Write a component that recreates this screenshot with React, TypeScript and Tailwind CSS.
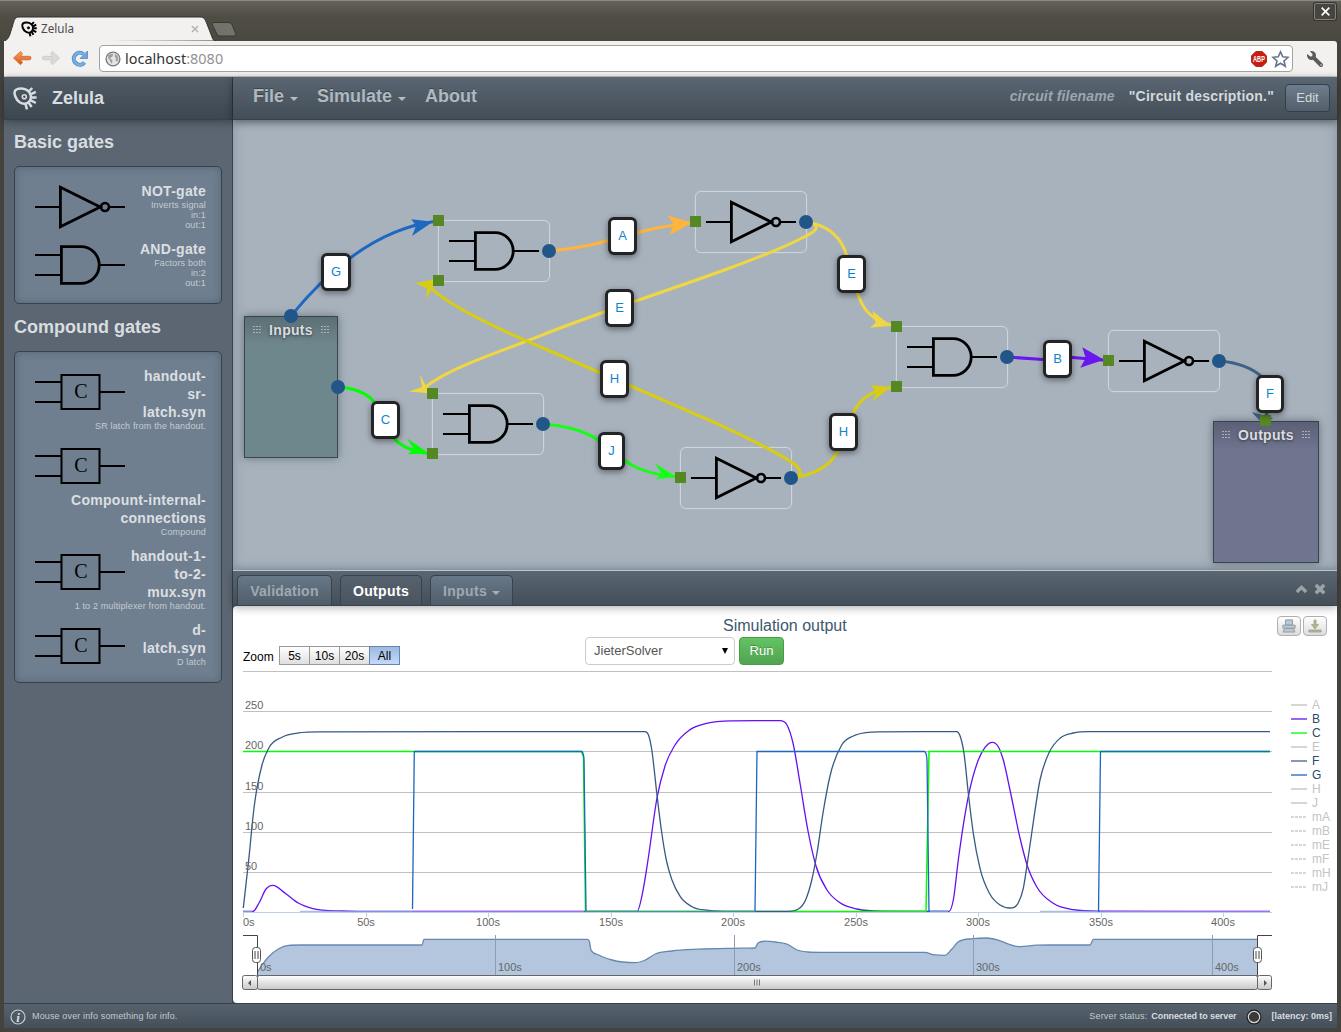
import React from "react";
import { FaWrench } from "react-icons/fa";

type Pt = [number, number];

/* Smooth cubic interpolation through a list of points, limited so that it never overshoots. */
function smooth(pts: Pt[]): string {
  const n = pts.length;
  const d: number[] = [];
  for (let i = 0; i < n - 1; i++) d.push((pts[i + 1][1] - pts[i][1]) / (pts[i + 1][0] - pts[i][0]));
  const m: number[] = [d[0]];
  for (let i = 1; i < n - 1; i++) {
    const h0 = pts[i][0] - pts[i - 1][0];
    const h1 = pts[i + 1][0] - pts[i][0];
    const mean = (h1 * d[i - 1] + h0 * d[i]) / (h0 + h1);
    const cap = 3 * Math.min(Math.abs(d[i - 1]), Math.abs(d[i]));
    m.push(d[i - 1] * d[i] <= 0 ? 0 : Math.sign(mean) * Math.min(Math.abs(mean), cap));
  }
  m.push(d[n - 2]);
  let s = `M${pts[0][0]} ${pts[0][1]}`;
  for (let i = 0; i < n - 1; i++) {
    const h = (pts[i + 1][0] - pts[i][0]) / 3;
    s += `C${(pts[i][0] + h).toFixed(2)} ${(pts[i][1] + m[i] * h).toFixed(2)} ${(pts[i + 1][0] - h).toFixed(2)} ${(pts[i + 1][1] - m[i + 1] * h).toFixed(2)} ${pts[i + 1][0]} ${pts[i + 1][1]}`;
  }
  return s;
}

const seriesB: Pt[] = [
  [243, 911.5], [253, 911.3], [259, 903], [266, 889], [273, 885.3], [285.3, 893.3], [298.7, 903.3],
  [312, 908.3], [342, 911], [380, 911.5], [637, 911.5], [643.7, 886.7], [648, 860], [657, 798], [665, 766],
  [675, 745], [690, 729.6], [706.7, 723.3], [733, 720.9], [780, 720.7], [787, 725], [793, 743], [800, 783],
  [808, 831], [816, 866], [827, 890], [840, 902.7], [857, 909], [883, 911.2], [949, 911.3], [953.3, 900], [958.3, 860],
  [968.3, 796.7], [978.3, 760], [985, 747.3], [992.3, 742.3], [998.3, 746.7], [1003.3, 760], [1010, 790],
  [1020, 838], [1027.3, 865.7], [1036.7, 886.7], [1053.3, 903.3], [1073.3, 909.7], [1100, 911.2], [1270, 911.5],
];
const seriesF: Pt[] = [
  [243.3, 908], [248.7, 860], [254, 808], [262, 765], [268.7, 748.3], [282, 737.2], [298.7, 732.9],
  [320, 731.8], [645, 731.6], [648.5, 735], [651.5, 748], [657, 795], [661.5, 831], [666.3, 860], [672, 880],
  [680.3, 896.7], [692, 906.7], [708.7, 910.3], [732, 911.3], [788, 911.3], [798, 909.3], [806, 899], [812, 879],
  [817, 853], [823, 813], [830, 776], [841.7, 745], [853.3, 736], [866, 732.6], [880, 731.8],
  [956.7, 731.6], [960, 735.7], [964, 753.3], [968.3, 793], [973.3, 833.3], [980, 868.3], [990, 894.3], [1000, 905],
  [1010, 908], [1018.3, 902.7], [1023.3, 888.3], [1027.3, 863.3], [1031.7, 833.3], [1040, 780], [1049.3, 752.3],
  [1060, 738.2], [1073.3, 733], [1090, 731.7], [1270, 731.6],
];
const navigator: Pt[] = [
  [257.5, 972], [262, 965], [268.7, 956.7], [278.7, 948.7], [288.7, 945.3], [300, 945], [422, 945], [424, 939.4],
  [587.5, 939.4], [589.4, 941.5], [591, 950], [598.7, 955], [612, 960], [635.3, 962.7], [645.3, 960], [655.3, 954],
  [672, 951], [698.7, 949.2], [732, 948.3], [755, 948], [758, 943], [766, 941.2], [775, 942], [788, 944.5], [796, 949.5],
  [808, 952], [820, 952.4], [925, 952.4], [933.3, 954.7], [945, 955.3], [951.7, 949.3], [958.3, 941.7], [973.3, 938.7],
  [986.7, 938], [996.7, 939.7], [1010, 944.6], [1020, 946.7], [1036.7, 945.2], [1050, 945], [1090, 945], [1093.3, 939.4],
  [1257.5, 939.4],
];

function Gate({ kind }: { kind: "not" | "and" | "c" }) {
  return (
    <svg width="90" height="50" viewBox="0 -25 90 50" fill="none" stroke="#000" className="block shrink-0">
      {kind === "not" && (
        <>
          <path d="M0 0H25M75 0H90" strokeWidth="2" />
          <path d="M25.4 -19.8L65.200 0L25.4 19.8Z" strokeWidth="2.8" />
          <circle cx="70" cy="0" r="4" strokeWidth="2.6" />
        </>
      )}
      {kind === "and" && (
        <>
          <path d="M0 -10H25M0 10H25M65 0H90" strokeWidth="2" />
          <path d="M26.4 -18.4H46A18.2 18.4 0 0 1 46 18.4H26.4Z" strokeWidth="2.8" />
        </>
      )}
      {kind === "c" && (
        <>
          <path d="M0 -10H26M0 10H26M65 0H90" strokeWidth="2" />
          <rect x="26.5" y="-17" width="38" height="34" strokeWidth="2" />
          <text x="45.8" y="5.6" textAnchor="middle" fontSize="20" fill="#000" stroke="none" fontFamily="Liberation Serif, serif">
            C
          </text>
        </>
      )}
    </svg>
  );
}

function LogoShape({ weight }: { weight: number }) {
  return (
    <>
      <path d="M2.400 3.200C5.200 .9 11.500 1 15 3.800C18.200 6.600 18.700 11 16.700 14C14.500 17.200 10.200 17.600 6.600 15.200C2.800 12.600 .2 6 2.400 3.200Z" strokeWidth={weight} strokeLinejoin="round" />
      <path d="M16.400 4L19.200 1M18.200 7.200L22.800 4.800M18.600 10.400H23.600M17.800 13.400L22.800 16M15.800 15.800L18.600 20M12.400 16.800L14 22.400" strokeWidth={weight} />
    </>
  );
}

function Caret() {
  return <span className="mt-[5px] ml-[6px] block h-0 w-0 border-x-4 border-t-4 border-x-transparent border-t-[#b4bdc6]" />;
}

function BrowserChrome() {
  return (
    <>
      <header className="relative flex h-[41px] shrink-0 items-start justify-between bg-linear-to-b from-[#66645c] via-[#504d45] via-40% to-[#4b4840]">
        <svg width="250" height="41" viewBox="0 0 250 41" className="block">
          <path d="M4 42C10 38 10 33 12.500 26C14 20 15 17 19 17H200C204 17 205 19 207 24L212 37C213 40 214 41 216 41Z" fill="#f2f1f0" stroke="#35332e" />
          <path d="M214 22.500H228C231 22.500 232 24 233 27L235.500 33C236 35 236 36 234 36H221C218 36 217 34.500 216 32L212.500 25C212 23.500 212 22.500 214 22.500Z" fill="#74726c" stroke="#3a3833" />
          <g transform="translate(21.200 21.500) scale(.66)" stroke="#000" fill="none">
            <LogoShape weight={3} />
            <circle cx="11" cy="9.600" r="1.800" fill="#000" />
          </g>
          <text x="41" y="33" fontSize="12" fill="#4c4c4c" fontFamily="Noto Sans, sans-serif" textLength="33" lengthAdjust="spacingAndGlyphs">
            Zelula
          </text>
          <path d="M192 26L198 32M198 26L192 32" stroke="#b5b3b0" strokeWidth="1.500" />
        </svg>
        <div className="mt-[3px] mr-[5px] flex h-[17px] w-[22px] items-center justify-center rounded-[2px] border border-[#84827b] bg-[#47453f] shadow-[0_0_0_1px_#35332e]">
          <svg width="9" height="9" viewBox="0 0 9 9">
            <path d="M.7 .7L8.300 8.300M8.300 .7L.7 8.300" stroke="#fff" strokeWidth="1.700" />
          </svg>
        </div>
      </header>
      <div className="mx-[4px] flex h-[36px] shrink-0 items-center rounded-tr-[3px] border-b border-[#c6c4c0] bg-[#f2f1f0]">
        <svg width="95" height="34" viewBox="4 42 95 34" className="block">
          <defs>
            <linearGradient id="orange" x1="0" y1="0" x2="0" y2="1">
              <stop offset="0" stopColor="#f5a962" />
              <stop offset="1" stopColor="#dd4f14" />
            </linearGradient>
          </defs>
          <path d="M13.500 58L20.500 51.500L22.500 53.500L20.500 56.300H29.500Q31 56.300 31 58T29.500 59.800H20.500L22.500 62.500L20.500 64.700Z" fill="url(#orange)" stroke="#d0602a" strokeWidth=".8" />
          <path d="M59.500 58L52.500 51.500L50.500 53.500L52.500 56.300H44Q42.500 56.300 42.500 58T44 59.800H52.500L50.500 62.500L52.500 64.700Z" fill="#dbdad8" stroke="#c8c6c4" strokeWidth=".8" />
          <path d="M84.500 62.500A6 6 0 1 1 83.500 54" fill="none" stroke="#4d8ac9" strokeWidth="4" />
          <path d="M84.500 62.500A6 6 0 1 1 83.500 54" fill="none" stroke="#79aee0" strokeWidth="2.400" />
          <path d="M87.500 51V58.500H80Z" fill="#6fa5da" stroke="#4d8ac9" strokeWidth=".8" />
        </svg>
        <div className="flex h-[27px] w-[1194px] items-center rounded-[4px] border border-[#a5a39f] bg-white pl-[5px]">
          <svg width="16" height="16" viewBox="0 0 16 16" className="block">
            <circle cx="8" cy="8" r="6.900" fill="#e6e6e6" stroke="#777" strokeWidth="1.300" />
            <path d="M3 4.500Q6 2 8.500 3L7.500 5.500L5 7.500L7.500 9L7 13Q5 11 4.500 9Q2.500 7 3 4.500ZM10 3L12.500 4.500L13.500 8L12 11L10.500 9.500L11 7L9.500 5.500Z" fill="#a2a2a2" />
          </svg>
          <div className="ml-[4px] text-[14.400px] leading-[24px] tracking-[0.04px] text-[#333]" style={{ fontFamily: '"Noto Sans", sans-serif' }}>
            localhost<span className="text-[#929292]">:8080</span>
          </div>
          <svg width="42" height="20" viewBox="1249 48 42 20" className="mr-[1px] ml-auto block">
            <path d="M1255.800 50.500H1262.200L1266.500 54.800V61.200L1262.200 65.500H1255.800L1251.500 61.200V54.800Z" fill="#cb1d0c" stroke="#9c3a30" />
            <text x="1259" y="61" textAnchor="middle" fontSize="8.500" fontWeight="bold" fill="#fff" textLength="12" lengthAdjust="spacingAndGlyphs" fontFamily="Liberation Sans, sans-serif">
              ABP
            </text>
            <path d="M1280.500 50.800L1282.800 55.800L1288 56.300L1284 60L1285.300 65.200L1280.500 62.300L1275.700 65.200L1277 60L1273 56.300L1278.200 55.800Z" fill="#fff" stroke="#66738e" strokeWidth="1.600" />
          </svg>
        </div>
        <FaWrench size={16} color="#5b5b5b" className="ml-[14px] -scale-x-100" />
      </div>
    </>
  );
}

const basicGates = [
  { kind: "not" as const, name: ["NOT-gate"], info: ["Inverts signal", "in:1", "out:1"] },
  { kind: "and" as const, name: ["AND-gate"], info: ["Factors both", "in:2", "out:1"] },
];
const compoundGates = [
  { kind: "c" as const, name: ["handout-", "sr-", "latch.syn"], info: ["SR latch from the handout."] },
  { kind: "c" as const, name: ["Compount-internal-", "connections"], info: ["Compound"], clear: true },
  { kind: "c" as const, name: ["handout-1-", "to-2-", "mux.syn"], info: ["1 to 2 multiplexer from handout."] },
  { kind: "c" as const, name: ["d-", "latch.syn"], info: ["D latch"] },
];

function GateList({ items }: { items: { kind: "not" | "and" | "c"; name: string[]; info: string[]; clear?: boolean }[] }) {
  return (
    <ul className="flex flex-col gap-[10px] rounded-[5px] border border-[#36424d] bg-[#6f7f8f] py-[15px] pr-[15px] pl-[20px] text-right shadow-[inset_0_0_9px_rgba(40,55,70,0.35)]">
      {items.map((g) => (
        <li key={g.name.join("")}>
          <div className={g.clear ? "h-[50px]" : "float-left h-[46px]"}>
            <Gate kind={g.kind} />
          </div>
          <h3 className="text-[14px] leading-[18px] font-bold tracking-[0.28px] whitespace-nowrap text-[#dcdfe2]">
            {g.name.map((l) => (
              <div key={l}>{l}</div>
            ))}
          </h3>
          <div className="text-[9px] leading-[10px] tracking-[0.15px] whitespace-nowrap text-[#c5cbd1]">
            {g.info.map((l) => (
              <div key={l}>{l}</div>
            ))}
          </div>
        </li>
      ))}
    </ul>
  );
}

function Sidebar() {
  return (
    <aside className="flex w-[229px] shrink-0 flex-col border-r border-[#36424d] bg-[#5b6672]">
      <div className="flex h-[43px] items-center border-b border-[#36414b] bg-linear-to-b from-[#505b66] to-[#3c464f] pl-[9px] shadow-[0_2px_8px_rgba(0,0,0,0.35)]">
        <svg width="24" height="24" viewBox="0 0 24 24" fill="none" stroke="#d9dde0" className="mt-[1px] block shrink-0">
          <LogoShape weight={2.5} />
          <circle cx="11.300" cy="9.800" r="2" strokeWidth="1.600" />
        </svg>
        <h1 className="ml-[15px] pb-[1px] text-[18px] leading-[20px] font-bold text-[#d9dde0]">Zelula</h1>
      </div>
      <div className="flex-1 px-[10px]">
        <h2 className="h-[46px] pt-[11px] text-[18px] leading-[22px] font-bold text-[#d9dde0]">Basic gates</h2>
        <GateList items={basicGates} />
        <h2 className="h-[47px] pt-[12px] text-[18px] leading-[22px] font-bold text-[#d9dde0]">Compound gates</h2>
        <GateList items={compoundGates} />
      </div>
    </aside>
  );
}

function TopBar() {
  return (
    <nav className="relative z-10 flex h-[43px] shrink-0 items-center border-b border-[#36414b] bg-linear-to-b from-[#5a6672] to-[#444e58] pl-[20px] text-[18px] font-bold text-[#b0b8c0] shadow-[0_2px_8px_rgba(0,0,0,0.4)]">
      <div className="flex w-[64px] items-center pb-[3px] text-shadow-[0_-1px_0_rgba(0,0,0,0.3)]">
        File
        <Caret />
      </div>
      <div className="flex w-[108px] items-center pb-[3px] text-shadow-[0_-1px_0_rgba(0,0,0,0.3)]">
        Simulate
        <Caret />
      </div>
      <div className="pb-[3px] text-shadow-[0_-1px_0_rgba(0,0,0,0.3)]">About</div>
      <div className="mr-[14px] ml-auto pb-[4px] text-[14px] tracking-[0.15px] text-[#9ea6ae] italic">circuit filename</div>
      <div className="pb-[4px] text-[14px] tracking-[0.2px] text-[#d4d8dc]">"Circuit description."</div>
      <button className="mr-[7px] ml-[11px] h-[28px] w-[45px] rounded-[4px] border border-[#333f4b] bg-linear-to-b from-[#6d7d8d] to-[#535f6b] text-[13px] font-normal text-[#d4d8dc]">Edit</button>
    </nav>
  );
}

const nodes: { kind: "not" | "and"; at: string }[] = [
  { kind: "and", at: "left-[205px] top-[100px]" },
  { kind: "not", at: "left-[462px] top-[71px]" },
  { kind: "and", at: "left-[199px] top-[273px]" },
  { kind: "not", at: "left-[447px] top-[327px]" },
  { kind: "and", at: "left-[663px] top-[206px]" },
  { kind: "not", at: "left-[875px] top-[210px]" },
];

const labels = [
  { t: "G", at: "left-[88px] top-[133px] w-[30px]" },
  { t: "A", at: "left-[375px] top-[97px] w-[29px]" },
  { t: "E", at: "left-[372px] top-[169px] w-[29px]" },
  { t: "H", at: "left-[367px] top-[240px] w-[29px]" },
  { t: "C", at: "left-[138px] top-[281px] w-[29px]" },
  { t: "J", at: "left-[365px] top-[312px] w-[27px]" },
  { t: "E", at: "left-[604px] top-[135px] w-[29px]" },
  { t: "H", at: "left-[596px] top-[293px] w-[29px]" },
  { t: "B", at: "left-[810px] top-[220px] w-[29px]" },
  { t: "F", at: "left-[1023px] top-[255px] w-[28px]" },
];

const wires = [
  { c: "#1f68c1", d: "M291 316C335 262 385 227 438 221", a: "411.300,219.300 433,221.700 412,236 416,225.700" },
  { c: "#ffb43c", d: "M549 251C610 246 635 228 692 222.500", a: "667.300,215.300 692,222.700 669.300,235.300 674,224.300" },
  { c: "#f0d741", d: "M806 222Q828 226 803 237.500C770 255 700 279 633 302S560 328 527.700 340.700S445 370 426 387", a: "420,374.700 426,386 436,394 409.300,391.500 422,387" },
  { c: "#d8cd10", d: "M791 478Q806 477 796.700 466Q784 455 716.700 423.300L550 351Q452 310 430 287", a: "415.300,283 437,279 426.300,299.300 427,288.500" },
  { c: "#13ff13", d: "M543 424C625 430 600 472 680 477", a: "655,463.300 676,476.700 655.700,479.300 661.700,474" },
  { c: "#00ff00", d: "M338 387C405 392 360 446 432 454", a: "407,438.300 428.700,453.300 407.700,454.300 413.700,449.300" },
  { c: "#f0d741", d: "M806 222C875 232 830 316 896 326", a: "872.300,310.700 891,325.700 870,327.700 875.700,322.700" },
  { c: "#d8cd10", d: "M791 478C872 468 822 394 896 387", a: "870.700,385.300 891,387 872,401.700 876.700,392.300" },
  { c: "#6a16ee", d: "M1007 357L1043 359.500M1070 357.200L1108 360.500", a: "1082.300,347.300 1104,359.700 1080.300,367.700 1085.700,358" },
  { c: "#3f6087", d: "M1219 361C1255 363 1287 387 1264 418", a: "1251.700,412 1273,418 1265,425 1258,419" },
];

const squares: Pt[] = [[433, 215], [433, 275], [427, 388], [427, 448], [690, 216], [675, 472], [891, 321], [891, 381], [1103, 355], [1260, 415]];
const dots: Pt[] = [[291, 316], [338, 387], [549, 251], [543, 424], [806, 222], [791, 478], [1007, 357], [1219, 361]];

function Grip() {
  return (
    <svg width="8" height="8" viewBox="0 0 8 8" className="block">
      <path d="M0 .5H8M0 3.500H8M0 6.500H8" stroke="#c3cccf" strokeWidth="1" strokeDasharray="2 1" opacity=".7" />
    </svg>
  );
}

function Canvas() {
  return (
    <main className="relative h-[450px] shrink-0 overflow-hidden bg-[#a8b2bd] shadow-[inset_0_0_12px_rgba(70,85,100,0.35)]">
      <div className="absolute top-[196px] left-[11px] h-[142px] w-[94px] border border-[#39464d] bg-[#6e878d] shadow-[0_0_8px_rgba(50,60,70,0.55)]">
        <div className="flex h-[28px] items-center justify-center gap-[8px] bg-linear-to-b from-[#5c6f74] to-[#6e878d] pb-[2px] text-[14px] leading-[16px] font-bold tracking-[0.3px] text-[#d8dddf] text-shadow-[0_1px_3px_rgba(0,0,0,0.5)]">
          <Grip />
          Inputs
          <Grip />
        </div>
      </div>
      <div className="absolute top-[301px] left-[980px] h-[142px] w-[106px] border border-[#39424f] bg-[#6f758f] shadow-[0_0_8px_rgba(50,60,70,0.55)]">
        <div className="flex h-[28px] items-center justify-center gap-[8px] bg-linear-to-b from-[#5c6076] to-[#6f758f] pb-[2px] text-[14px] leading-[16px] font-bold tracking-[0.3px] text-[#d8dddf] text-shadow-[0_1px_3px_rgba(0,0,0,0.5)]">
          <Grip />
          Outputs
          <Grip />
        </div>
      </div>
      {nodes.map((n) => (
        <div key={n.at} className={`absolute h-[62px] w-[112px] rounded-[6px] border border-[#cdd4da] pt-[5px] pl-[10px] shadow-[0_0_1px_rgba(220,226,232,0.8)] ${n.at}`}>
          <Gate kind={n.kind} />
        </div>
      ))}
      <svg width="1104" height="450" viewBox="233 120 1104 450" className="absolute top-0 left-0 block">
        {wires.map((w) => (
          <g key={w.d}>
            <path d={w.d} fill="none" stroke={w.c} strokeWidth="3" />
            <polygon points={w.a} fill={w.c} />
          </g>
        ))}
        {squares.map(([x, y]) => (
          <rect key={`${x}-${y}`} x={x} y={y} width="11" height="11" fill="#558822" />
        ))}
        {dots.map(([x, y]) => (
          <circle key={`${x}-${y}`} cx={x} cy={y} r="7" fill="#225588" />
        ))}
      </svg>
      {labels.map((l) => (
        <div key={l.at} className={`absolute flex h-[38px] items-center justify-center rounded-[6px] border-[3px] border-[#222426] bg-white text-[13px] text-[#0f86cc] shadow-[0_2px_6px_rgba(0,0,0,0.45)] ${l.at}`}>
          {l.t}
        </div>
      ))}
    </main>
  );
}

function PanelTabs() {
  return (
    <div className="relative z-10 flex h-[36px] shrink-0 items-end border-t border-b border-t-[#b9c6cf] border-b-[#36424d] bg-linear-to-b from-[#5a6672] to-[#444e58] pl-[4px] text-[14px] font-bold text-[#9fa9b3] shadow-[0_2px_8px_rgba(0,0,0,0.3)]">
      <div className="flex h-[30px] w-[95px] items-center justify-center rounded-t-[5px] border border-b-0 border-[#36424d] bg-linear-to-b from-[#677888] to-[#515d69] pt-[1px] tracking-[0.22px]">Validation</div>
      <div className="ml-[8px] flex h-[30px] w-[82px] items-center justify-center rounded-t-[5px] border border-b-0 border-[#36424d] bg-linear-to-b from-[#56626e] to-[#49545f] pt-[1px] tracking-[0.35px] text-white">Outputs</div>
      <div className="ml-[8px] flex h-[30px] w-[83px] items-center justify-center rounded-t-[5px] border border-b-0 border-[#36424d] bg-linear-to-b from-[#677888] to-[#515d69] pt-[1px] tracking-[0.35px]">
        Inputs
        <span className="mt-[4px] ml-[5px] block h-0 w-0 border-x-4 border-t-4 border-x-transparent border-t-[#a5afb8]" />
      </div>
      <svg width="32" height="12" viewBox="1295 583 32 12" className="mr-[10px] mb-[10px] ml-auto block" fill="none" stroke="#9aa2aa" strokeWidth="3.200">
        <path d="M1296.800 592L1301.500 587.300L1306.200 592" />
        <path d="M1315.800 585L1324.200 593.200M1324.200 585L1315.800 593.200" strokeWidth="3.600" />
      </svg>
    </div>
  );
}

const zoomButtons = ["5s", "10s", "20s"];

function ChartHeader() {
  return (
    <div className="flex h-[65px]">
      <div className="flex w-[342px] shrink-0 items-center pt-[34px] pl-[10px] text-[12px] text-black">
        <span className="mt-[2px] w-[36px]">Zoom</span>
        {zoomButtons.map((z) => (
          <button key={z} className="mr-[-1px] h-[19px] w-[31px] border border-[#999] bg-linear-to-b from-white to-[#dfdfdf] pt-[1px] text-[12px] leading-[17px]">
            {z}
          </button>
        ))}
        <button className="h-[19px] w-[31px] border border-[#6886ad] bg-linear-to-b from-[#9bbbe0] to-[#c5d9fb] pt-[1px] text-[12px] leading-[17px]">All</button>
      </div>
      <div className="flex w-[400px] flex-col pt-[9px] pl-[10px]">
        <div className="ml-[138px] text-[16px] leading-[21px] text-[#3E576F]">Simulation output</div>
        <div className="mt-px flex gap-[4px] text-[13px]">
          <div className="flex h-[28px] w-[150px] items-center justify-between rounded-[4px] border border-[#ccc] bg-white pr-[6px] pl-[8px] text-[#555]">
            JieterSolver
            <svg width="6" height="6" viewBox="0 0 6 6">
              <path d="M0 0H6L3 6Z" fill="#000" />
            </svg>
          </div>
          <button className="h-[28px] w-[45px] rounded-[4px] border border-[#4b9a4b] bg-linear-to-b from-[#62c462] to-[#51a351] pb-[1px] text-white text-shadow-[0_-1px_0_rgba(0,0,0,0.25)]">Run</button>
        </div>
      </div>
      <div className="ml-auto flex gap-[2px] pt-[10px] pr-[10px]">
        <button className="flex h-[20px] w-[24px] items-center justify-center rounded-[4px] border border-[#b0b0b0] bg-linear-to-b from-white to-[#dcdcdc]">
          <svg width="14" height="14" viewBox="0 0 14 14" fill="#b5c9df" stroke="#9a9a9a" strokeWidth="1">
            <path d="M3.500 .9H10.500V6H3.500Z" />
            <path d="M2.600 9.600H11.400L13 13H1Z" />
            <path d="M.9 6.200H13.100V9.200H.9Z" />
          </svg>
        </button>
        <button className="flex h-[20px] w-[24px] items-center justify-center rounded-[4px] border border-[#b0b0b0] bg-linear-to-b from-white to-[#dcdcdc]">
          <svg width="14" height="14" viewBox="0 0 14 14" fill="#a8bf77" stroke="#a0a0a0" strokeWidth=".8">
            <path d="M6 1H8V5.500H10.500L7 10L3.500 5.500H6Z" />
            <path d="M.9 11H13.100V13H.9Z" />
          </svg>
        </button>
      </div>
    </div>
  );
}

const gridY = [671.5, 711.5, 751.5, 792.5, 832.5, 872.5];
const yLabels: [string, number][] = [["250", 709], ["200", 749], ["150", 790], ["100", 830], ["50", 870]];
const xLabels: [string, number][] = [["50s", 366], ["100s", 488], ["150s", 611], ["200s", 733], ["250s", 856], ["300s", 978], ["350s", 1101], ["400s", 1223]];
const navLabels: [string, number][] = [["100s", 495.5], ["200s", 734.5], ["300s", 973.5], ["400s", 1212.5]];

function Handle({ x }: { x: number }) {
  return (
    <g>
      <rect x={x - 4} y="947.500" width="8" height="15" rx="3" fill="#fff" stroke="#555" />
      <path d={`M${x - 1.5} 951V959M${x + 1.5} 951V959`} stroke="#444" strokeWidth="1" />
    </g>
  );
}

function Plot() {
  return (
    <svg width="1034" height="322" viewBox="241 671 1034 322" className="ml-[8px] block shrink-0" fontFamily="Liberation Sans, sans-serif" fontSize="11">
      <defs>
        <linearGradient id="bar" x1="0" y1="0" x2="0" y2="1">
          <stop offset="0" stopColor="#fff" />
          <stop offset="1" stopColor="#c8c8c8" />
        </linearGradient>
      </defs>
      {gridY.map((y) => (
        <path key={y} d={`M243 ${y}H1272`} stroke="#c0c0c0" />
      ))}
      {xLabels.map(([t, x]) => (
        <g key={t}>
          <path d={`M${x + 0.5} 912V917`} stroke="#c0d0e0" />
          <text x={x} y="926" textAnchor="middle" fill="#666">
            {t}
          </text>
        </g>
      ))}
      <path d="M243.500 912V917" stroke="#c0d0e0" />
      <text x="243" y="926" fill="#666">
        0s
      </text>
      <g fill="none" strokeWidth="1.300">
        <path d={smooth(seriesB)} stroke="#6410f0" />
        <path d="M243 751.400H581.500L583.500 757L585.500 911.500H926L929 751.400H1270" stroke="#00ff00" strokeWidth="1.500" />
        <path d={smooth(seriesF)} stroke="#375a85" />
        <path d="M412.500 909L414.300 751.500H581.500Q583.500 751.500 584 760L586 911.500M755 911.500L757 751.500H924.500Q926.500 752 927 760L929 911.500H948M1098.500 911.500L1100.500 751.500H1270" stroke="#1b66bf" />
        <path d="M243 911.500H252M300 911.500H412M930 911.500H948M1040 911.500H1098" stroke="#8fb0e0" opacity=".8" />
        <path d="M412 911.500H584M1100 911.500H1270" stroke="#a58ee8" opacity=".8" />
        <path d="M586 911.500H755" stroke="#3c9a88" />
      </g>
      <path d="M243 912.500H1272" stroke="#c0d0e0" />
      {yLabels.map(([t, y]) => (
        <text key={t} x="245" y={y} fill="#666">
          {t}
        </text>
      ))}
      <path d={`${smooth(navigator)}V975H257.500Z`} fill="#b3c6de" />
      <path d={smooth(navigator)} fill="none" stroke="#6688b0" strokeWidth="1.300" />
      {navLabels.map(([t, x]) => (
        <g key={t} fill="#666">
          <path d={`M${x} 935V975`} stroke="#8a9db5" />
          <text x={x + 2.5} y="971">
            {t}
          </text>
        </g>
      ))}
      <text x="260" y="971" fill="#666">
        0s
      </text>
      <path d="M243 935.500H257.500V975.500H1257.500V935.500H1272" fill="none" stroke="#444" />
      <rect x="257.500" y="975.500" width="1000" height="14" rx="2" fill="url(#bar)" stroke="#666" />
      <rect x="242.500" y="975.500" width="15" height="14" rx="2" fill="url(#bar)" stroke="#666" />
      <rect x="1257.500" y="975.500" width="14" height="14" rx="2" fill="url(#bar)" stroke="#666" />
      <path d="M251 980V986L248 983ZM1264 980V986L1267 983Z" fill="#555" />
      <path d="M754.500 979.500V985.500M757 979.500V985.500M759.500 979.500V985.500" stroke="#777" />
      <Handle x={256.5} />
      <Handle x={1257.5} />
    </svg>
  );
}

const legend: [string, string][] = [
  ["A", "off"], ["B", "#8040f0"], ["C", "#2fff2f"], ["E", "off"], ["F", "#6680a5"], ["G", "#4585cf"], ["H", "off"], ["J", "off"],
  ["mA", "dash"], ["mB", "dash"], ["mE", "dash"], ["mF", "dash"], ["mH", "dash"], ["mJ", "dash"],
];

function Legend() {
  return (
    <ul className="mt-[27px] ml-[16px] text-[12px] leading-[14px]">
      {legend.map(([name, c]) => {
        const off = c === "off" || c === "dash";
        return (
          <li key={name} className="flex h-[14px] items-center">
            <svg width="16" height="2" viewBox="0 0 16 2" className="mr-[5px] block">
              <path d="M0 1H16" stroke={off ? "#ccc" : c} strokeWidth="1.600" strokeDasharray={c === "dash" ? "3 1" : undefined} />
            </svg>
            <span className={off ? "text-[#c4c4c4]" : "text-[#274b6d]"}>{name}</span>
          </li>
        );
      })}
    </ul>
  );
}

function Footer() {
  return (
    <footer className="mx-[4px] flex h-[25px] shrink-0 items-center border-t border-[#36414b] bg-linear-to-b from-[#56626e] to-[#454f59] pr-[5px] pl-[6px] text-[9px] text-[#c3cad0]">
      <svg width="16" height="16" viewBox="0 0 16 16" className="mt-[2px] block">
        <circle cx="8" cy="8" r="7" fill="none" stroke="#c9ced3" strokeWidth="1.200" />
        <text x="8" y="12.500" textAnchor="middle" fontSize="13" fontStyle="italic" fontWeight="bold" fontFamily="Liberation Serif, serif" fill="#dde1e4">
          i
        </text>
      </svg>
      <span className="mt-[1px] ml-[6px] tracking-[0.14px]">Mouse over info something for info.</span>
      <span className="mt-[1px] ml-auto tracking-[0.18px]">Server status:</span>
      <b className="mt-[1px] ml-[4px] tracking-[-0.1px] text-[#d9dde0]">Connected to server</b>
      <svg width="16" height="16" viewBox="0 0 16 16" className="mt-[2px] mr-[9px] ml-[10px] block">
        <circle cx="8" cy="8" r="7.500" fill="#1c1c1c" />
        <circle cx="8" cy="8" r="5.700" fill="#3a3a3a" stroke="#d5d5d5" strokeWidth="1.200" />
      </svg>
      <b className="mt-[1px] text-[#d9dde0]">[latency: 0ms]</b>
    </footer>
  );
}

export default function App() {
  return (
    <div className="flex h-[1032px] w-[1341px] flex-col overflow-hidden border-t border-[#8b8982] bg-[#45433d]" style={{ fontFamily: '"Liberation Sans", Arial, sans-serif' }}>
      <div className="-mt-px flex flex-col">
        <BrowserChrome />
      </div>
      <div className="mx-[4px] flex h-[926px] shrink-0">
        <Sidebar />
        <div className="flex w-[1104px] flex-col bg-[#4b5661]">
          <TopBar />
          <Canvas />
          <PanelTabs />
          <section className="flex-1 rounded-l-[4px] bg-white">
            <ChartHeader />
            <div className="flex">
              <Plot />
              <Legend />
            </div>
          </section>
        </div>
      </div>
      <Footer />
    </div>
  );
}
